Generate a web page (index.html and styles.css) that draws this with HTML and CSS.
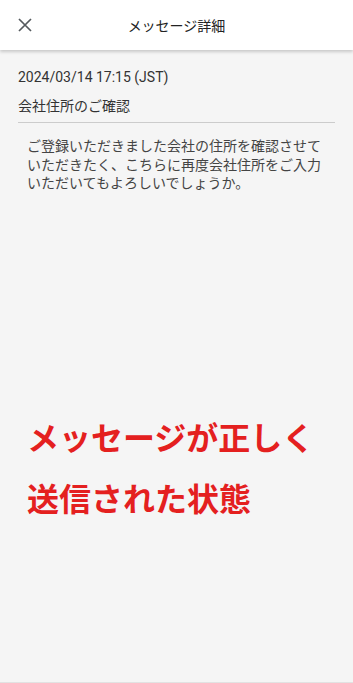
FILE: index.html
```html
<!DOCTYPE html>
<html lang="ja">
<head>
    <meta charset="UTF-8">
    <meta name="viewport" content="width=device-width, initial-scale=1.0">
    <title>メッセージ詳細</title>
    <link rel="stylesheet" href="styles.css">
</head>
<body>
    <div class="page">
        <header class="header">
            <button class="close-btn" aria-label="閉じる">
                <svg width="14" height="14" viewBox="0 0 14 14">
                    <path d="M1 1L13 13M13 1L1 13" stroke="#555a5e" stroke-width="1.7" fill="none"/>
                </svg>
            </button>
            <h1 class="title">メッセージ詳細</h1>
        </header>

        <div class="content">
            <p class="date">2024/03/14 17:15 (JST)</p>
            <p class="subject">会社住所のご確認</p>
            <p class="message">ご登録いただきました会社の住所を確認させていただきたく、こちらに再度会社住所をご入力いただいてもよろしいでしょうか。</p>

            <div class="note">
                <p>メッセージが正しく</p>
                <p>送信された状態</p>
            </div>
        </div>
    </div>
</body>
</html>
```

FILE: styles.css
```css
body {
    margin: 0;
    background-color: #f5f5f5;
    font-family: Roboto, "Noto Sans CJK JP", sans-serif;
    color: #333333;
}
.page {
    height: 682px;
    border-bottom: 1px solid #e2e2e2;
    overflow: hidden;
}
.header {
    position: relative;
    height: 50px;
    background-color: #ffffff;
    box-shadow: 0 2px 3px rgba(0, 0, 0, 0.18);
    display: flex;
    align-items: center;
    justify-content: center;
}
.close-btn {
    position: absolute;
    left: 18px;
    top: 18px;
    padding: 0;
    border: none;
    background: none;
    width: 14px;
    height: 14px;
    display: flex;
}
.title {
    margin: 0;
    font-size: 14px;
    font-weight: normal;
    color: #222222;
}
.content {
    padding: 17px 18px 0;
}
.date {
    margin: 0;
    font-size: 14px;
    line-height: 20px;
}
.subject {
    margin: 9px 0 0;
    font-size: 14px;
    line-height: 20px;
    padding-bottom: 6px;
    border-bottom: 1px solid #cccccc;
}
.message {
    margin: 0;
    padding: 14px 9px 0;
    font-size: 14px;
    line-height: 18.5px;
    color: #444444;
}
.note {
    margin-top: 216px;
    padding-left: 9px;
    color: #e4201f;
    font-weight: bold;
    font-size: 32px;
}
.note p {
    margin: 0;
    line-height: 61px;
}
```
